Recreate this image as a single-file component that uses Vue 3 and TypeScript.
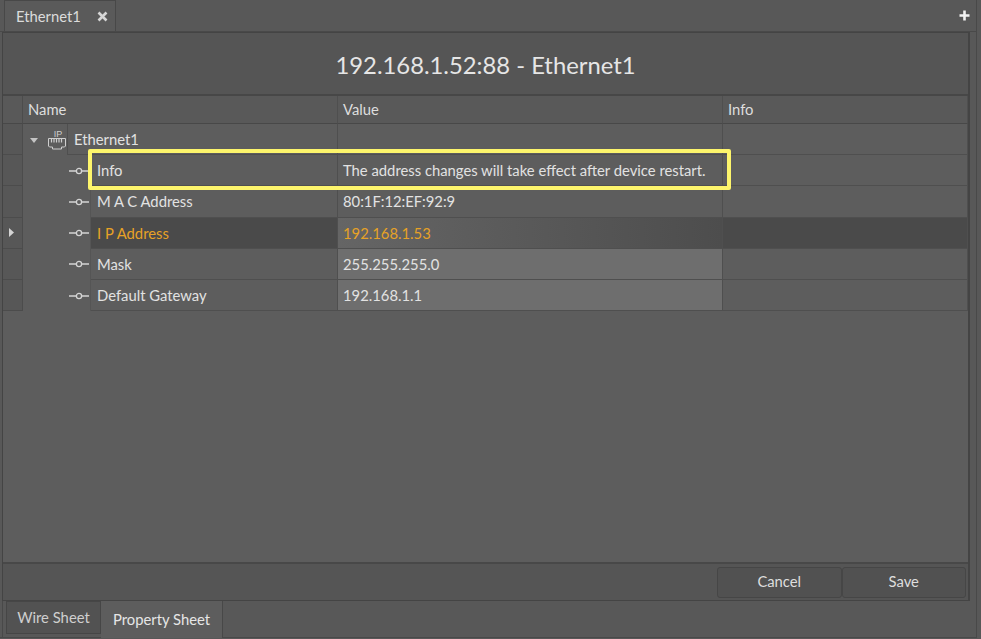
<script setup lang="ts">
interface Row { name: string; value: string; editable: boolean; selected: boolean }
const rows: Row[] = [
  { name: 'Info', value: 'The address changes will take effect after device restart.', editable: false, selected: false },
  { name: 'M A C Address', value: '80:1F:12:EF:92:9', editable: false, selected: false },
  { name: 'I P Address', value: '192.168.1.53', editable: true, selected: true },
  { name: 'Mask', value: '255.255.255.0', editable: true, selected: false },
  { name: 'Default Gateway', value: '192.168.1.1', editable: true, selected: false },
]
</script>

<template>
  <div class="app">
    <div class="frame">
      <div class="tabstrip">
        <div class="doctab">
          <span>Ethernet1</span>
          <svg class="close" width="11" height="11" viewBox="0 0 11 11"><path d="M1.5 1.5l8 8M9.5 1.5l-8 8" stroke="#d6d6d6" stroke-width="2.600" fill="none"/></svg>
        </div>
        <svg class="plus" width="11" height="11" viewBox="0 0 11 11"><path d="M5.500 0.500v10M0.500 5.500h10" stroke="#f2f2f2" stroke-width="2.600" fill="none"/></svg>
      </div>

      <div class="panel">
        <div class="title">192.168.1.52:88 - Ethernet1</div>
        <div class="table">
          <div class="head row">
            <div class="gutter"></div>
            <div class="cell name">Name</div>
            <div class="cell value">Value</div>
            <div class="cell info">Info</div>
          </div>
          <div class="row">
            <div class="gutter"></div>
            <div class="name tree">
              <div class="lead root-lead">
                <svg class="caret" width="8" height="5" viewBox="0 0 8 5"><path d="M0 0h8L4 5z" fill="#c4c4c4"/></svg>
                <svg class="ip" width="18" height="20" viewBox="0 0 18 20">
                  <text x="10" y="7" text-anchor="middle" class="iptext">IP</text>
                  <path d="M0.500 8.500h17v7.500l-1 1h-3v2h-9v-2h-3l-1-1z" fill="none" stroke="#cfcfcf" stroke-width="1"/>
                  <path d="M3.500 9v3.500M6 9v3.500M8.500 9v3.500M11 9v3.500M13.500 9v3.500" stroke="#cfcfcf" stroke-width="1.200"/>
                </svg>
              </div>
              <div class="label">Ethernet1</div>
            </div>
            <div class="cell value"></div>
            <div class="cell info"></div>
          </div>
          <div v-for="r in rows" :key="r.name" class="row" :class="{ selected: r.selected }">
            <div class="gutter">
              <svg v-if="r.selected" width="5" height="9" viewBox="0 0 5 9"><path d="M0 0v9l5-4.500z" fill="#d4d4d4"/></svg>
            </div>
            <div class="name tree">
              <div class="lead child-lead">
                <svg width="20" height="8" viewBox="0 0 20 8"><path d="M0 4h7M13 4h7" stroke="#d4d4d4" stroke-width="1.400"/><circle cx="10" cy="4" r="2.600" fill="none" stroke="#d4d4d4" stroke-width="1.300"/></svg>
              </div>
              <div class="label" :class="{ accent: r.selected }">{{ r.name }}</div>
            </div>
            <div class="cell value" :class="{ editable: r.editable, accent: r.selected, 'editable-sel': r.selected }">{{ r.value }}</div>
            <div class="cell info"></div>
          </div>
          <div class="callout"></div>
        </div>
        <div class="footer">
          <button class="btn">Cancel</button>
          <button class="btn">Save</button>
        </div>
      </div>

      <div class="bottom">
        <div class="sheet wire">Wire Sheet</div>
        <div class="sheet active">Property Sheet</div>
      </div>
    </div>
  </div>
</template>

<style>
html, body { margin: 0; background: #585858; }
</style>

<style scoped>
.app {
  width: 981px;
  height: 639px;
  overflow: hidden;
  background: #585858;
  color: #e2e2e2;
  font-family: Lato, "Open Sans", sans-serif;
  font-size: 14.800px;
}
.frame {
  width: 977px;
  height: 638px;
  box-sizing: border-box;
  border-right: 1px solid #494949;
  border-bottom: 1px solid #494949;
  display: flex;
  flex-direction: column;
}
.tabstrip {
  height: 32px;
  flex: none;
  display: flex;
  align-items: flex-start;
  justify-content: space-between;
  padding-left: 4px;
  padding-right: 6px;
  box-sizing: border-box;
  border-bottom: 1px solid #494949;
}
.doctab {
  width: 112px;
  height: 31px;
  box-sizing: border-box;
  border: 1px solid #484848;
  border-bottom: none;
  background: #5a5a5a;
  display: flex;
  align-items: center;
  padding: 0 7px 0 11px;
  justify-content: space-between;
  color: #dcdcdc;
}
.plus { margin-top: 10px; }
.panel {
  margin-left: 2px;
  width: 968px;
  height: 569px;
  flex: none;
  box-sizing: border-box;
  border: 1px solid #444;
  border-right-width: 2px;
  background: #5b5b5b;
  display: flex;
  flex-direction: column;
}
.title {
  height: 63px;
  flex: none;
  box-sizing: border-box;
  border-bottom: 2px solid #474747;
  background: #555;
  display: flex;
  align-items: center;
  justify-content: center;
  font-size: 23.800px;
  color: #e6e6e6;
  padding-top: 2px;
}
.table {
  position: relative;
  flex: 1;
  background: #5d5d5d;
  border-bottom: 2px solid #484848;
}
.row {
  display: grid;
  grid-template-columns: 20px 315px 385px 245px;
  height: 31.200px;
  box-sizing: border-box;
}
.row.head { height: 28px; }
.gutter {
  box-sizing: border-box;
  background: #575757;
  border-right: 1px solid #4c4c4c;
  border-bottom: 1px solid #4c4c4c;
  display: flex;
  align-items: center;
  justify-content: center;
  padding-right: 2px;
}
.head .gutter, .head .cell { background: #595959; }
.cell {
  box-sizing: border-box;
  padding-left: 5px;
  line-height: 30px;
  border-bottom: 1px solid #4f4f4f;
  border-right: 1px solid #4f4f4f;
  background: #5d5d5d;
  white-space: nowrap;
}
.head .cell { line-height: 27px; color: #dedede; border-bottom-color: #484848; }
.head .gutter { border-bottom-color: #484848; }
.tree { display: flex; min-width: 0; }
.lead {
  flex: none;
  display: flex;
  align-items: center;
  box-sizing: border-box;
}
.root-lead { width: 45px; padding-left: 7px; gap: 10px; border-right: 1px solid #4f4f4f; }
.child-lead { width: 68px; padding-left: 46px; border-right: 1px solid #555; }
.caret { flex: none; margin-top: 2px; }
.ip { flex: none; margin-top: 1px; }
.iptext { font-size: 9px; fill: #cfcfcf; font-family: "Liberation Sans", sans-serif; }
.label {
  flex: 1;
  padding-left: 6px;
  line-height: 30px;
  border-bottom: 1px solid #4f4f4f;
  border-right: 1px solid #4f4f4f;
  box-sizing: border-box;
  white-space: nowrap;
}
.editable { background: #6e6e6e; }
.selected .label, .selected .info { background: #4a4a4a; }
.selected .value.editable-sel { background: linear-gradient(90deg, #656565, #4d4d4d); }
.accent, .row .accent { color: #e7a226; }
.callout {
  position: absolute;
  left: 85px;
  top: 53px;
  width: 643px;
  height: 41px;
  box-sizing: border-box;
  border: 4px solid #fdf56c;
  border-radius: 2px;
  pointer-events: none;
}
.footer {
  height: 36px;
  flex: none;
  background: #555;
  display: flex;
  justify-content: flex-end;
  align-items: center;
  padding-right: 2px;
  box-sizing: border-box;
}
.btn {
  width: 124.500px;
  height: 31px;
  background: #515151;
  border: 1px solid #464646;
  border-radius: 3px;
  color: #dedede;
  font: inherit;
  padding: 0 0 2px;
}
.bottom {
  flex: 1;
  display: flex;
  align-items: flex-start;
  margin-left: 2px;
  padding-left: 3px;
  border-left: 1px solid #494949;
}
.sheet { box-sizing: border-box; white-space: nowrap; }
.wire {
  width: 95px;
  height: 33px;
  line-height: 31px;
  text-align: center;
  background: #525252;
  border: 1px solid #464646;
  color: #cfcfcf;
}
.active {
  width: 122px;
  height: 37px;
  line-height: 37px;
  text-align: center;
  background: #5d5d5d;
  border-right: 1px solid #484848;
  color: #e6e6e6;
}
</style>
